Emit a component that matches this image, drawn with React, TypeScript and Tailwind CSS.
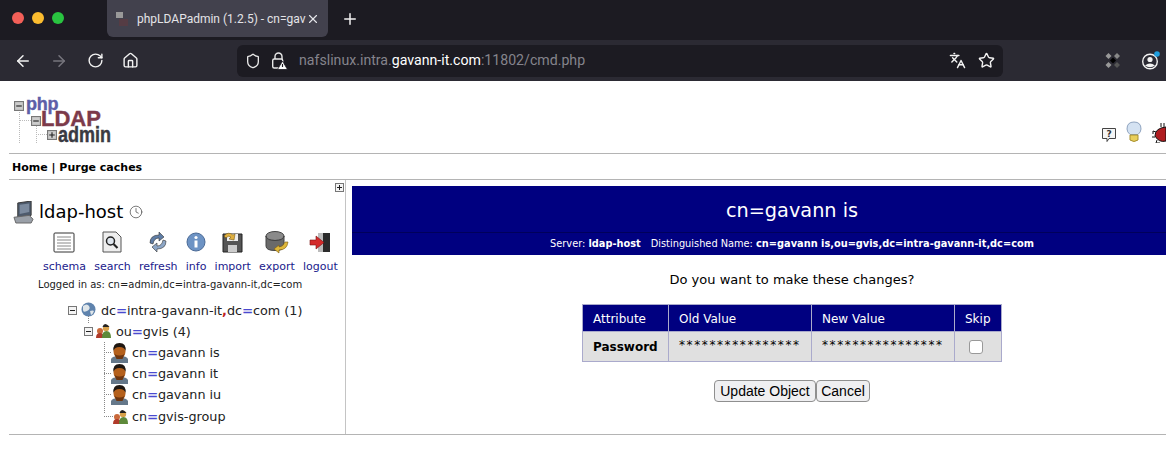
import React from "react";
import { ArrowLeft, ArrowRight, RotateCw, Home, Shield, Languages, Star, Plus, X, Clock } from "lucide-react";

const Box = ({ plus, size = 9, fill = "#f4f4f4" }: { plus?: boolean; size?: number; fill?: string }) => (
  <svg width={size} height={size} viewBox="0 0 9 9" className="shrink-0">
    <rect x="0.5" y="0.5" width="8" height="8" fill={fill} stroke="#777" />
    <path d={plus ? "M2 4.500h5M4.500 2v5" : "M2 4.500h5"} stroke="#222" />
  </svg>
);

const Person = () => (
  <svg width="17" height="20" viewBox="0 0 17 20" className="shrink-0">
    <path d="M0 20v-4q1-3 8.500-3t8.500 3v4z" fill="#65788a" />
    <ellipse cx="8.500" cy="8.500" rx="6" ry="7" fill="#b4601c" />
    <path d="M2.500 8Q1.500 0 8.500 0t6 8q-1-4-6-4t-6 4z" fill="#1f1711" />
    <path d="M3.500 11q5 3 10 0l-2 5h-6z" fill="#6e3610" />
  </svg>
);

const Group = ({ size = 15 }: { size?: number }) => (
  <svg width={size} height={size} viewBox="0 0 15 15" className="shrink-0">
    <circle cx="4" cy="8" r="3" fill="#c9693a" />
    <path d="M0 15q0-5 4-5t4 5z" fill="#b03a2a" />
    <circle cx="10" cy="5" r="3.200" fill="#d8a24a" />
    <path d="M6.500 4q2-6 7 0z" fill="#222" />
    <path d="M6 15q0-7 4.500-7t4.500 7z" fill="#5e8a3a" />
  </svg>
);

const Eq = () => <span className="text-[#4a4ad0] [-webkit-text-stroke:0.4px_#4a4ad0]">=</span>;

const tools: [string, React.ReactNode][] = [
  ["schema", <svg width="22" height="21" viewBox="0 0 22 21"><rect x="1" y="1" width="20" height="19" rx="1" fill="#fff" stroke="#333" /><path d="M4 5h14M4 8h14M4 11h14M4 14h14M4 17h14" stroke="#888" /></svg>],
  ["search", <svg width="20" height="22" viewBox="0 0 20 22"><path d="M1 1h13l5 5v15H1z" fill="#eee" stroke="#555" /><circle cx="8.500" cy="10" r="4" fill="#dfe6ee" stroke="#222" strokeWidth="1.500" /><path d="M11.500 13l4 4" stroke="#222" strokeWidth="2.200" /></svg>],
  ["refresh", <svg width="22" height="22" viewBox="0 0 22 22"><path d="M3 12Q3 4 12 4V1l5 5-5 4V7q-5 0-6 6z" fill="#5f7da6" stroke="#333" strokeWidth=".6" /><path d="M19 10q0 8-9 8v3l-5-5 5-4v3q5 0 6-6z" fill="#8da6c6" stroke="#333" strokeWidth=".6" /></svg>],
  ["info", <svg width="20" height="20" viewBox="0 0 20 20"><circle cx="10" cy="10" r="9" fill="#6d93c4" stroke="#4a6a96" /><circle cx="10" cy="5.500" r="1.600" fill="#fff" /><path d="M8.500 8.500h3v7h-3z" fill="#fff" /></svg>],
  ["import", <svg width="21" height="22" viewBox="0 0 21 22"><path d="M1 3h19v18H1z" fill="#555" stroke="#222" /><path d="M5 3h11v7H5z" fill="#eee" /><path d="M6 14h9v7H6z" fill="#ccc" /><path d="M2 5q4-5 9-1l2-1-1 6-5-1 2-2q-3-2-5 1z" fill="#e0b040" stroke="#7a5a10" strokeWidth=".6" /></svg>],
  ["export", <svg width="24" height="23" viewBox="0 0 24 23"><ellipse cx="10" cy="5" rx="9" ry="4.500" fill="#8a8a8a" stroke="#444" /><path d="M1 5v10q0 4.500 9 4.500T19 15V5q0 4.500-9 4.500T1 5z" fill="#6a6a6a" stroke="#444" /><path d="M23 11q-1 8-9 8v3l-5-4 5-4v2q4 0 6-5z" fill="#e0b83a" stroke="#7a5a10" strokeWidth=".6" /></svg>],
  ["logout", <svg width="22" height="21" viewBox="0 0 22 21"><path d="M9 1h12v19H9z" fill="#2b2b2b" /><path d="M9 1h5v19H9z" fill="#bbb" /><path d="M1 8h6V4l8 6.500L7 17v-4H1z" fill="#d42a2a" stroke="#7a1010" strokeWidth=".6" /></svg>],
];

export default function App() {
  return (
    <div className="w-[1166px] h-[449px] overflow-hidden bg-white font-['DejaVu_Sans',sans-serif] text-black">
      {/* Tab strip */}
      <div className="flex h-10 items-start bg-[#1c1b22] pl-3">
        <div className="mt-3 flex items-center gap-2">
          <span className="h-3 w-3 rounded-full bg-[#f25f58]" />
          <span className="h-3 w-3 rounded-full bg-[#fbbc2f]" />
          <span className="h-3 w-3 rounded-full bg-[#29c440]" />
        </div>
        <div className="ml-[43px] flex h-[37px] w-[221px] items-center rounded-b-md bg-[#42414d] pl-[9px] pr-2 font-['Roboto',sans-serif] text-[12px] text-[#e4e4e8]">
          <svg width="13" height="14" viewBox="0 0 13 14" className="shrink-0"><path d="M0 0h7v6H0z" fill="#999" /><path d="M3 7h9v7H3z" fill="#553c44" /></svg>
          <span className="ml-2 shrink-0 whitespace-nowrap">phpLDAPadmin (1.2.5) - cn=gav</span>
          <X size={14} className="ml-auto shrink-0 text-[#e4e4e8]" />
        </div>
        <Plus size={18} className="ml-[13px] mt-[10px] text-[#f2f2f2]" />
      </div>
      {/* Toolbar */}
      <div className="flex h-[41px] items-center bg-[#2b2a33] pl-[14px]">
        <ArrowLeft size={18} className="text-[#f2f2f2]" />
        <ArrowRight size={18} className="ml-[18px] text-[#77767e]" />
        <RotateCw size={17} className="ml-[19px] text-[#f2f2f2]" />
        <Home size={17} className="ml-[18px] text-[#f2f2f2]" />
        <div className="ml-[98px] flex h-8 w-[766px] shrink-0 items-center rounded-md bg-[#1c1b22] pl-2 pr-2 font-['Roboto',sans-serif] text-[14.150px] text-[#85848c]">
          <Shield size={16} className="shrink-0 text-[#e8e8e8]" />
          <svg width="17" height="18" viewBox="0 0 17 18" className="ml-[10px] shrink-0">
            <path d="M4 7V4.500a3.500 3.500 0 0 1 7 0V7" fill="none" stroke="#e8e8e8" strokeWidth="1.400" />
            <rect x="1.700" y="7" width="10" height="9" rx="1.500" fill="none" stroke="#e8e8e8" strokeWidth="1.400" />
            <path d="M11.500 9l5 8.500h-10z" fill="#fff" stroke="#1c1b22" strokeWidth=".8" />
            <path d="M11.500 12v3" stroke="#1c1b22" strokeWidth="1.200" />
          </svg>
          <span className="ml-[11px] whitespace-nowrap">nafslinux.intra.<span className="text-white">gavann-it.com</span>:11802/cmd.php</span>
          <Languages size={17} className="ml-auto shrink-0 text-[#f2f2f2]" />
          <Star size={17} className="ml-3 shrink-0 text-[#f2f2f2]" />
        </div>
        <svg width="18" height="18" viewBox="0 0 18 18" className="ml-[101px] shrink-0">
          <path d="M4.500 1l3 3-3 3-3-3z" fill="#999" />
          <path d="M13 1l3 3-3 3-3-3z" fill="#888" />
          <path d="M4.500 10l3 3-3 3-3-3z" fill="#999" />
          <path d="M13 10l3 3-3 3-3-3z" fill="#555" />
          <path d="M9 5.500l3 3-3 3-3-3z" fill="#000" />
        </svg>
        <svg width="20" height="20" viewBox="0 0 20 20" className="ml-[19px] shrink-0">
          <circle cx="9" cy="10.500" r="7.300" fill="none" stroke="#f2f2f2" strokeWidth="1.400" />
          <circle cx="9" cy="8.500" r="2.600" fill="#f2f2f2" />
          <path d="M4 14.500q5-4 10 0-5 3.500-10 0z" fill="#f2f2f2" />
          <circle cx="16" cy="3" r="2.800" fill="#1f9fe0" />
        </svg>
      </div>

      {/* Page header */}
      <div className="flex h-[72px] items-end justify-between pl-[14px]">
        <div className="relative mb-[8px] h-[50px] w-[100px] font-['Liberation_Sans',sans-serif] font-bold">
          <span className="absolute left-[5px] top-[14px] h-[34px] border-l border-dotted border-[#bbb]" />
          <span className="absolute left-[5px] top-[25px] w-[12px] border-t border-dotted border-[#bbb]" />
          <span className="absolute left-[22px] top-[30px] h-[18px] border-l border-dotted border-[#bbb]" />
          <span className="absolute left-[22px] top-[39px] w-[11px] border-t border-dotted border-[#bbb]" />
          <div className="absolute left-0 top-[6px]"><Box size={10} fill="#ccc" /></div>
          <span className="absolute left-[12px] top-[2px] h-[14px] text-[18px] leading-[14px] tracking-[-0.2px] text-[#5d5fa8] [-webkit-text-stroke:0.4px_#5d5fa8]">php</span>
          <div className="absolute left-[17px] top-[21px]"><Box size={10} fill="#ccc" /></div>
          <span className="absolute left-[27px] top-[16px] h-[16px] text-[22px] leading-[16px] text-[#7c3a4a] [-webkit-text-stroke:0.4px_#7c3a4a]">LDAP</span>
          <div className="absolute left-[33px] top-[35px]"><Box plus size={10} fill="#ccc" /></div>
          <span className="absolute left-[44px] top-[32px] h-[15px] origin-left scale-x-90 scale-y-110 text-[20px] leading-[15px] text-[#3a3a42] [-webkit-text-stroke:0.4px_#3a3a42]">admin</span>
        </div>
        <div className="mb-[10px] flex items-end">
          <svg width="16" height="16" viewBox="0 0 16 16" className="mr-[9px] shrink-0">
            <path d="M1.500 1.500h13v10H8l-2 3v-3H1.500z" fill="#f5f5f5" stroke="#444" />
            <text x="8" y="10" textAnchor="middle" fontSize="9" fontWeight="700" fontFamily="DejaVu Sans" fill="#333">?</text>
          </svg>
          <svg width="16" height="22" viewBox="0 0 16 22" className="mr-[10px] shrink-0">
            <path d="M8 1q7 0 7 7 0 3-3 5.500H4Q1 11 1 8q0-7 7-7z" fill="#d4e2f2" stroke="#8fa4c0" />
            <path d="M4 14h8v5q-4 3-8 0z" fill="#e8cf5c" stroke="#a89030" />
          </svg>
          <svg width="14" height="20" viewBox="0 0 14 20" className="shrink-0">
            <path d="M3 13q0-8 11-9v14q-7 2-11-5z" fill="#b01c20" stroke="#111" />
            <path d="M4 9L1 8v3M3 14H0M5 17l-1 3h4M9 4V0M12 4V0" stroke="#111" fill="none" />
          </svg>
        </div>
      </div>

      <div className="ml-[9px] border-y border-[#b4b4b4]">
        <div className="h-[25px] pl-[3px] pt-[6px] text-[11px] leading-[16px] font-bold">Home | Purge caches</div>
      </div>

      {/* Body */}
      <div className="ml-[9px] flex h-[255px] border-b border-[#b4b4b4]">
        <div className="flex h-full w-[337px] shrink-0 flex-col border-r border-[#c4c4c4] pt-[3px]">
          <div className="flex justify-end pr-[1px]"><Box plus /></div>
          <div className="mt-[8px] flex items-center pl-[4px]">
            <svg width="21" height="23" viewBox="0 0 22 24" className="shrink-0">
              <path d="M5 2l14-2v15l-14 2z" fill="#4d5a6c" stroke="#333" />
              <path d="M7 4l10-1.500v9l-10 2z" fill="#7b8a9e" />
              <path d="M1 17l16-2 4 4-2 4H3z" fill="#9aa0a8" stroke="#666" />
            </svg>
            <span className="ml-[5px] text-[18px] leading-[24px]">ldap-host</span>
            <Clock size={14} strokeWidth={1.2} className="ml-[6px] text-[#444]" />
          </div>
          <div className="ml-[34px] mt-[7px] flex gap-[8.200px] text-[11px] text-[#1a1a8c]">
            {tools.map(([label, icon]) => (
              <div key={label} className="flex flex-col items-center">
                <span className="flex h-[22px] items-center justify-center">{icon}</span>
                <span className="mt-[6px] leading-[15px]">{label}</span>
              </div>
            ))}
          </div>
          <div className="ml-[29px] mt-[4px] text-[10px] leading-[14px] text-[#222]">Logged in as: cn=admin,dc=intra-gavann-it,dc=com</div>
          <div className="mt-[8px] text-[12.800px] leading-[21px] text-[#222]">
            <div className="ml-[59px] flex h-[21px] items-center gap-[4px]">
              <Box />
              <svg width="15" height="15" viewBox="0 0 15 15" className="-mt-[3px] shrink-0">
                <circle cx="7.500" cy="7.500" r="7" fill="#5f83ad" />
                <path d="M2 4q4-3 6 0t-2 5-4-1zM9 9q3-1 4 0-1 3-3 4z" fill="#dfe6ea" />
              </svg>
              <span className="ml-[1px]">dc<Eq />intra-gavann-it<span className="font-bold text-[#c02020]">,</span>dc<Eq />com (1)</span>
            </div>
            <div className="relative ml-[75px] flex h-[21px] items-center gap-[3px]">
              <span className="absolute -top-[5px] left-[4px] h-[7px] border-l border-dotted border-[#888]" />
              <Box />
              <div className="-mt-[3px]"><Group /></div>
              <span className="ml-[2px]">ou<Eq />gvis (4)</span>
            </div>
            <div className="ml-[95px] -mb-[71px] h-[71px] border-l border-dotted border-[#888]" />
            {["gavann is", "gavann it", "gavann iu"].map((n) => (
              <div key={n} className="ml-[95px] flex h-[21px] items-center">
                <span className="w-[7px] border-t border-dotted border-[#888]" />
                <Person />
                <span className="ml-[4px]">cn<Eq />{n}</span>
              </div>
            ))}
            <div className="ml-[95px] mt-[1px] flex h-[21px] items-center">
              <span className="w-[9px] border-t border-dotted border-[#888]" />
              <Group />
              <span className="ml-[4px]">cn<Eq />gvis-group</span>
            </div>
          </div>
        </div>

        {/* Right */}
        <div className="ml-[6px] flex-1 overflow-hidden pt-[6px]">
          <div className="w-[880px] bg-[#000080] text-white">
            <div className="h-[47px] border-b border-[#00005a] text-center text-[19.300px] leading-[50px]">cn=gavann is</div>
            <div className="flex h-[22px] items-center justify-center whitespace-nowrap text-[9.800px]">
              <span>Server: <b>ldap-host</b></span>
              <span className="ml-[10px]">Distinguished Name: <b>cn=gavann is,ou=gvis,dc=intra-gavann-it,dc=com</b></span>
            </div>
          </div>
          <div className="mt-[16px] w-[880px] text-center text-[13px] leading-[18px]">Do you want to make these changes?</div>
          <table className="ml-[230px] mt-[15px] w-[420px] table-fixed border-collapse border border-[#aaaacc] text-[12px]">
            <thead>
              <tr className="h-[27px] bg-[#000080] text-left text-white">
                <th className="w-[86px] border border-[#aaaacc] pl-[10px] pt-[2px] font-normal">Attribute</th>
                <th className="w-[143px] border border-[#aaaacc] pl-[10px] pt-[2px] font-normal">Old Value</th>
                <th className="w-[143px] border border-[#aaaacc] pl-[10px] pt-[2px] font-normal">New Value</th>
                <th className="border border-[#aaaacc] pl-[10px] pt-[2px] font-normal">Skip</th>
              </tr>
            </thead>
            <tbody>
              <tr className="h-[30px] bg-[#e0e0e0]">
                <td className="border border-[#aaaacc] pl-[10px] font-bold">Password</td>
                <td className="border border-[#aaaacc] pl-[10px] pb-[3px] text-[12px] tracking-[1.600px]">****************</td>
                <td className="border border-[#aaaacc] pl-[10px] pb-[3px] text-[12px] tracking-[1.600px]">****************</td>
                <td className="border border-[#aaaacc] pl-[14px]"><input type="checkbox" readOnly className="block h-[14px] w-[14px] appearance-none rounded-[3px] border border-[#999] bg-white" /></td>
              </tr>
            </tbody>
          </table>
          <div className="ml-[362px] mt-[18px] flex font-['Liberation_Sans',sans-serif] text-[14px]">
            <button className="h-[22px] w-[102px] rounded-[4px] border border-[#8f8f8f] bg-[#efeff1] leading-[20px]">Update Object</button>
            <button className="h-[22px] w-[54px] rounded-[4px] border border-[#8f8f8f] bg-[#efeff1] leading-[20px]">Cancel</button>
          </div>
        </div>
      </div>
    </div>
  );
}
